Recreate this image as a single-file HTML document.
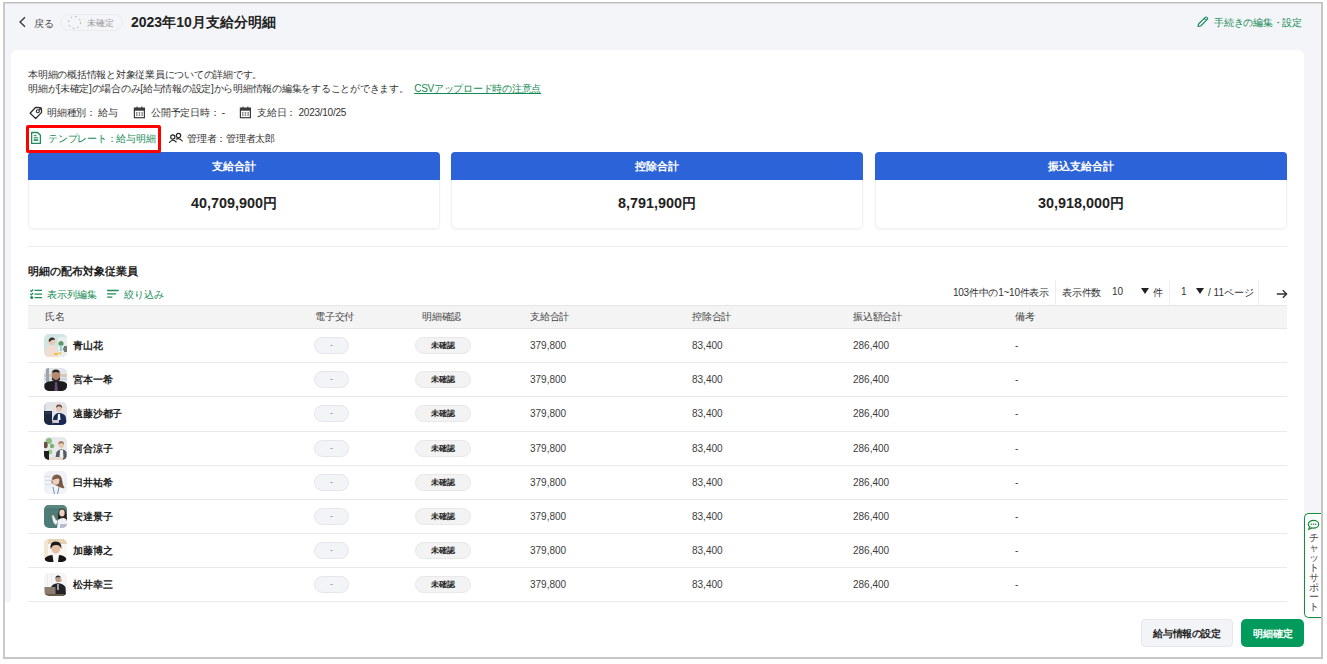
<!DOCTYPE html>
<html lang="ja">
<head>
<meta charset="utf-8">
<style>
*{box-sizing:border-box;margin:0;padding:0}
html,body{width:1327px;height:664px;overflow:hidden;background:#fff;font-family:"Liberation Sans",sans-serif;color:#333}
.a{position:absolute;white-space:nowrap}
.frame{position:absolute;left:3px;top:2px;width:1320px;height:657px;border:2px solid #c6c6c6;border-top:1px solid #bdbdbd;border-left-color:#cacaca;background:#f4f5f9;box-shadow:inset 0 1px 0 #dddddf}
.card{position:absolute;left:11px;top:50px;width:1293px;height:600px;background:#fff;border-radius:6px}
.t93{font-size:10px;letter-spacing:-0.25px}
.green{color:#138a52}
.link{color:#138a52;text-decoration:underline}
.redbox{left:26px;top:125px;width:135px;height:28px;border:3px solid #ff0000;border-radius:2px;z-index:2}
.sum{position:absolute;top:152px;width:412px;height:77px;border-radius:5px;background:#fff;box-shadow:0 1px 2px rgba(0,0,0,0.05)}
.sum .h{border-radius:4px 4px 0 0;height:27.5px;background:#2c63d8;color:#fff;font-weight:bold;font-size:11px;text-align:center;line-height:29px}
.sum .v{height:49px;text-align:center;font-weight:bold;font-size:14.4px;line-height:47px;color:#222;border:1px solid #f0f0f2;border-top:none;border-radius:0 0 5px 5px}
.divider{position:absolute;left:28px;top:246px;width:1259px;height:1px;background:#ededf0}
.vline{position:absolute;top:280px;width:1px;height:25px;background:#eee}
.thbar{position:absolute;left:28px;top:305px;width:1259px;height:24px;background:#f4f4f4;border-top:1px solid #e6e6e6;border-bottom:1px solid #e6e6e6}
.row{position:absolute;left:28px;width:1259px;height:34px;border-bottom:1px solid #e9e9e9}
.th{top:310px;font-size:10px;letter-spacing:-0.25px;color:#444}
.av{position:absolute;left:16px;top:5px;width:23px;height:23px}
.nm{position:absolute;left:45px;top:10px;font-weight:bold;color:#222;font-size:10px;letter-spacing:-0.15px}
.p1{position:absolute;left:286px;top:8px;width:35px;height:17px;border:1px solid #e4e6ec;border-radius:9px;background:#f3f4f8;text-align:center;line-height:15px;font-size:9px;color:#888}
.p2{position:absolute;left:387px;top:8px;width:56px;height:17px;border:1px solid #e8e8e8;border-radius:9px;background:#f3f3f3;text-align:center;line-height:16px;font-size:8px;letter-spacing:0.3px;font-weight:bold;color:#222}
.c{position:absolute;top:10.5px;font-size:10px;color:#3c3c3c}
.footer{position:absolute;left:5px;top:602px;width:1316px;height:55px;background:#fff}
.btn1{position:absolute;left:1141px;top:619px;width:92px;height:28px;border:1px solid #e6e7ee;border-radius:4px;background:#f3f4f8;font-size:10px;letter-spacing:-0.35px;font-weight:bold;text-align:center;line-height:28px;color:#222}
.btn2{position:absolute;left:1241px;top:619px;width:63px;height:28px;border-radius:5px;background:#039b5b;font-size:10px;font-weight:bold;text-align:center;line-height:30px;color:#fff}
.chat{position:absolute;left:1304px;top:513px;width:17px;height:105px;border:1.5px solid #178c3e;border-right:none;border-radius:5px 0 0 5px;background:#fff;box-shadow:0 1px 3px rgba(0,0,0,0.08)}
</style>
</head>
<body>
<div class="frame"></div>
<!-- header -->
<svg class="a" style="left:18px;top:16px" width="9" height="12" viewBox="0 0 9 12"><polyline points="7,1.2 2,6 7,10.8" fill="none" stroke="#333" stroke-width="1.3"/></svg>
<div class="a t93" style="left:34px;top:17px;color:#444">戻る</div>
<div class="a" style="left:60px;top:14px;width:63px;height:17px;border:1px solid #ebebee;border-radius:9px;background:#f4f5f8"></div>
<svg class="a" style="left:67px;top:15px" width="15" height="15" viewBox="0 0 15 15"><circle cx="7.5" cy="7.5" r="6" fill="none" stroke="#aaa" stroke-width="1" stroke-dasharray="1.6 3.1"/></svg>
<div class="a" style="left:87px;top:16.5px;font-size:9px;color:#999">未確定</div>
<div class="a" style="left:131px;top:14px;font-size:14px;font-weight:bold;color:#222">2023年10月支給分明細</div>
<svg class="a" style="left:1196px;top:16px" width="13" height="12" viewBox="0 0 13 12"><path d="M2,10.5 L2.6,8 L9.2,1.4 Q10,0.7 10.8,1.4 L11.3,1.9 Q12,2.7 11.3,3.4 L4.7,10 Z M8.3,2.4 L10.3,4.4" fill="none" stroke="#17885a" stroke-width="1.1" stroke-linejoin="round"/></svg>
<div class="a green t93" style="left:1214px;top:16px">手続きの編集・設定</div>

<div class="card"></div>
<div class="a t93" style="left:28px;top:68px;line-height:14px;color:#333">本明細の概括情報と対象従業員についての詳細です。<br>明細が[未確定]の場合のみ[給与情報の設定]から明細情報の編集をすることができます。 <span class="link" style="margin-left:3px">CSVアップロード時の注意点</span></div>

<div class="a t93" style="left:47px;top:106px">明細種別： 給与</div>
<div class="a t93" style="left:151px;top:106px">公開予定日時： -</div>
<div class="a t93" style="left:257px;top:106px">支給日： 2023/10/25</div>

<svg class="a" style="left:29px;top:106px" width="14" height="14" viewBox="0 0 14 14"><path d="M1.1,7.3 L6.7,1.3 L11.3,1.6 Q12.3,1.7 12.4,2.7 L12.6,6.4 L6.7,12.5 Z" fill="none" stroke="#2a2a2a" stroke-width="1.25" stroke-linejoin="round"/><circle cx="8.8" cy="5.2" r="1.5" fill="none" stroke="#2a2a2a" stroke-width="1.15"/><path d="M9.6,3.2 L11.2,1.7 L12.3,2.8 L10.8,4.4 Z" fill="#2a2a2a"/></svg>
<svg class="a" style="left:133px;top:106px" width="13" height="13" viewBox="0 0 13 13"><rect x="1.4" y="2.1" width="10" height="9.6" fill="none" stroke="#3a3a3a" stroke-width="1.2"/><rect x="1.4" y="2.1" width="10" height="2.6" fill="#3a3a3a"/><rect x="3.4" y="0.6" width="1.2" height="2.4" fill="#3a3a3a"/><rect x="8.2" y="0.6" width="1.2" height="2.4" fill="#3a3a3a"/><g fill="#3a3a3a"><rect x="3" y="6.4" width="1.5" height="1.1"/><rect x="5.7" y="6.4" width="1.5" height="1.1"/><rect x="8.4" y="6.4" width="1.5" height="1.1"/><rect x="3" y="8.5" width="1.5" height="1.1"/><rect x="5.7" y="8.5" width="1.5" height="1.1"/><rect x="8.4" y="8.5" width="1.5" height="1.1"/></g></svg>
<svg class="a" style="left:239px;top:106px" width="13" height="13" viewBox="0 0 13 13"><rect x="1.4" y="2.1" width="10" height="9.6" fill="none" stroke="#3a3a3a" stroke-width="1.2"/><rect x="1.4" y="2.1" width="10" height="2.6" fill="#3a3a3a"/><rect x="3.4" y="0.6" width="1.2" height="2.4" fill="#3a3a3a"/><rect x="8.2" y="0.6" width="1.2" height="2.4" fill="#3a3a3a"/><g fill="#3a3a3a"><rect x="3" y="6.4" width="1.5" height="1.1"/><rect x="5.7" y="6.4" width="1.5" height="1.1"/><rect x="8.4" y="6.4" width="1.5" height="1.1"/><rect x="3" y="8.5" width="1.5" height="1.1"/><rect x="5.7" y="8.5" width="1.5" height="1.1"/><rect x="8.4" y="8.5" width="1.5" height="1.1"/></g></svg>
<svg class="a" style="left:30px;top:131px" width="12" height="14" viewBox="0 0 12 14"><path d="M1.6,1.5 L7.6,1.5 L10.4,4.3 L10.4,12.4 L1.6,12.4 Z" fill="none" stroke="#1f8a5a" stroke-width="1.3" stroke-linejoin="round"/><rect x="3.6" y="4.2" width="3" height="1" fill="#1f8a5a"/><rect x="3.6" y="6.3" width="4.6" height="1.1" fill="#1f8a5a"/><rect x="3.6" y="8.3" width="4.6" height="1.6" fill="#1f8a5a"/></svg>
<svg class="a" style="left:168px;top:132px" width="16" height="12" viewBox="0 0 16 12"><circle cx="4.8" cy="5" r="2.1" fill="none" stroke="#222" stroke-width="1.15"/><circle cx="10.5" cy="3.5" r="2.2" fill="none" stroke="#222" stroke-width="1.15"/><path d="M1.4,10.4 Q4.8,6.4 8.2,10" fill="none" stroke="#222" stroke-width="1.15" stroke-linecap="round"/><path d="M8.4,7.1 Q11.4,5.6 14.3,9" fill="none" stroke="#222" stroke-width="1.15" stroke-linecap="round"/></svg>
<div class="a redbox"></div>
<div class="a t93 green" style="left:48px;top:132px">テンプレート：給与明細</div>
<div class="a t93" style="left:187px;top:132px">管理者：管理者太郎</div>

<div class="sum" style="left:28px"><div class="h">支給合計</div><div class="v">40,709,900円</div></div>
<div class="sum" style="left:451px"><div class="h">控除合計</div><div class="v">8,791,900円</div></div>
<div class="sum" style="left:875px"><div class="h">振込支給合計</div><div class="v">30,918,000円</div></div>

<div class="divider"></div>
<div class="a" style="left:28px;top:264px;font-size:11px;font-weight:bold;color:#222">明細の配布対象従業員</div>

<svg class="a" style="left:29px;top:288px" width="14" height="12" viewBox="0 0 14 12"><path d="M1.2,2.4 L2.4,3.4 L4.2,1.3 M1.2,5.8 L2.4,6.9 L4.2,4.8" fill="none" stroke="#1f8a5a" stroke-width="1.2"/><circle cx="2.7" cy="9.6" r="1.5" fill="#1f8a5a"/><path d="M5.5,2.3 L13,2.3 M5.5,6.2 L13,6.2 M5.5,9.6 L13,9.6" stroke="#1f8a5a" stroke-width="1.3"/></svg>
<svg class="a" style="left:106px;top:288px" width="14" height="12" viewBox="0 0 14 12"><path d="M1.6,2.5 L12.2,2.5 M1.6,5.9 L9.5,5.9 M1.6,9.1 L5.9,9.1" stroke="#1f8a5a" stroke-width="1.3" stroke-linecap="round"/></svg>
<div class="a green" style="left:47px;top:288px;font-size:10px">表示列編集</div>
<div class="a green" style="left:124px;top:288px;font-size:10px">絞り込み</div>

<div class="a t93" style="left:953px;top:285.5px">103件中の1~10件表示</div>
<div class="vline" style="left:1055px"></div>
<div class="a t93" style="left:1062px;top:285.5px">表示件数</div>
<div class="a" style="left:1112px;top:286px;font-size:10px;color:#333">10</div>
<svg class="a" style="left:1141px;top:288px" width="8" height="6" viewBox="0 0 8 6"><path d="M0,0 L8,0 L4,6 Z" fill="#222"/></svg><div class="a t93" style="left:1153px;top:285.5px">件</div>
<div class="vline" style="left:1169px"></div>
<div class="a" style="left:1181px;top:286px;font-size:10px;color:#333">1</div>
<svg class="a" style="left:1196px;top:288px" width="8" height="6" viewBox="0 0 8 6"><path d="M0,0 L8,0 L4,6 Z" fill="#222"/></svg><div class="a" style="left:1208px;top:285.5px;font-size:10px;color:#333">/ 11ページ</div>
<div class="vline" style="left:1258px"></div>
<svg class="a" style="left:1276px;top:289px" width="12" height="10" viewBox="0 0 12 10"><path d="M0.8,5 L10.6,5 M6.8,1.2 L10.6,5 L6.8,8.8" fill="none" stroke="#333" stroke-width="1.4"/></svg>

<div class="thbar"></div>
<div class="a th" style="left:45px">氏名</div>
<div class="a th" style="left:315px">電子交付</div>
<div class="a th" style="left:422px">明細確認</div>
<div class="a th" style="left:530px">支給合計</div>
<div class="a th" style="left:692px">控除合計</div>
<div class="a th" style="left:853px">振込額合計</div>
<div class="a th" style="left:1015px">備考</div>

<div class="row" style="top:329px;height:34px"><svg class="av" width="23" height="23" viewBox="0 0 23 23"><defs><clipPath id="c0"><rect width="23" height="23" rx="5"/></clipPath></defs><g clip-path="url(#c0)"><rect width="23" height="23" fill="#cfe6e3"/><rect x="14" y="3" width="9" height="20" fill="#e9efee"/><circle cx="17" cy="9.5" r="2.6" fill="#5f9a6a"/><rect x="16" y="11" width="2" height="6" fill="#9fd0cc"/><circle cx="21" cy="15" r="2" fill="#4f8a5a"/><rect x="20" y="12" width="3" height="6" fill="#777"/><ellipse cx="8" cy="7.5" rx="3.3" ry="3.6" fill="#e7c7b4"/><path d="M4.6,7 Q5,3.2 8.4,3.5 Q11,3.8 10.8,6 Q8,5 5.5,8 Z" fill="#3a302c"/><path d="M1,23 L1.5,14 Q4,11 8,11.5 Q12,12 13.5,15 L14,23 Z" fill="#f2ddd2"/><rect x="10" y="19" width="4" height="2" fill="#f2c040"/><rect x="14.5" y="18" width="3" height="2.5" fill="#f0d070"/></g></svg><span class="nm">青山花</span><span class="p1">-</span><span class="p2">未確認</span><span class="c" style="left:502px">379,800</span><span class="c" style="left:664px">83,400</span><span class="c" style="left:825px">286,400</span><span class="c" style="left:987px">-</span></div>
<div class="row" style="top:363px;height:34px"><svg class="av" width="23" height="23" viewBox="0 0 23 23"><defs><clipPath id="c1"><rect width="23" height="23" rx="5"/></clipPath></defs><g clip-path="url(#c1)"><rect width="23" height="23" fill="#e2e6ea"/><rect y="6" width="23" height="3" fill="#d9c8b8"/><rect y="10" width="23" height="2" fill="#c8d4e0"/><rect x="2" y="0" width="3" height="23" fill="#9aa4ae"/><ellipse cx="12" cy="7.5" rx="4.2" ry="5" fill="#b48a72"/><path d="M7.6,6 Q8,1.5 12,1.6 Q16,1.7 16.3,6 L15.5,4.5 Q12,3.5 8.5,4.5 Z" fill="#2a2220"/><path d="M8,9 Q12,15 16,9 L16,12 Q12,15.5 8,12 Z" fill="#3a2a24"/><path d="M0,23 L0.5,16 Q3,13 9,13 L15,13 Q21,13 23,16 L23,23 Z" fill="#1c1c1e"/><path d="M11,14 L13,14 L14,23 L10.5,23 Z" fill="#6a4a7a"/></g></svg><span class="nm">宮本一希</span><span class="p1">-</span><span class="p2">未確認</span><span class="c" style="left:502px">379,800</span><span class="c" style="left:664px">83,400</span><span class="c" style="left:825px">286,400</span><span class="c" style="left:987px">-</span></div>
<div class="row" style="top:397px;height:35px"><svg class="av" width="23" height="23" viewBox="0 0 23 23"><defs><clipPath id="c2"><rect width="23" height="23" rx="5"/></clipPath></defs><g clip-path="url(#c2)"><rect width="23" height="23" fill="#e4e4e6"/><rect x="0" y="1" width="1.5" height="14" fill="#bcd0e6"/><rect x="0" y="9" width="8" height="14" fill="#1e2840"/><rect x="1" y="10.5" width="6" height="1" fill="#3a4a66"/><ellipse cx="15" cy="6.5" rx="2.8" ry="3.3" fill="#e4c4b0"/><path d="M12,6 Q12,2.5 15,2.6 Q18.4,2.7 18.2,6.5 L17,5 Q15,3.6 13,5 Z" fill="#6a4a36"/><path d="M8,23 L9.5,15 Q12,10.5 15,11 Q19,11 21.5,14 L23,23 Z" fill="#1a2a56"/><path d="M14,12 L16,12 L16.5,18 L13.5,18 Z" fill="#f4f4f4"/><rect x="9" y="18" width="6" height="3" fill="#d8ccc4"/></g></svg><span class="nm">遠藤沙都子</span><span class="p1">-</span><span class="p2">未確認</span><span class="c" style="left:502px">379,800</span><span class="c" style="left:664px">83,400</span><span class="c" style="left:825px">286,400</span><span class="c" style="left:987px">-</span></div>
<div class="row" style="top:432px;height:34px"><svg class="av" width="23" height="23" viewBox="0 0 23 23"><defs><clipPath id="c3"><rect width="23" height="23" rx="5"/></clipPath></defs><g clip-path="url(#c3)"><rect width="23" height="23" fill="#e6eaec"/><circle cx="5" cy="4" r="3" fill="#8cbe80"/><circle cx="8" cy="9" r="2.2" fill="#7ab070"/><circle cx="6" cy="15" r="2.4" fill="#9acb8c"/><ellipse cx="1.5" cy="8" rx="2.2" ry="3.2" fill="#6a5040"/><rect x="0" y="14" width="5" height="9" fill="#1e1e22"/><ellipse cx="17.2" cy="8" rx="2.6" ry="3" fill="#e8c8b0"/><path d="M14.4,8 Q14,4 17.2,4.2 Q20.4,4.3 20,8 L19,6.5 Q17,5.2 15.2,6.8 Z" fill="#9a6a48"/><path d="M11,23 L12.5,15 Q15,12 17.5,12.2 Q21,12.5 22.5,15 L23,23 Z" fill="#585c62"/><path d="M16,13 L19,13 L19.5,21 L15.5,21 Z" fill="#f2f2f2"/><rect x="5" y="20" width="14" height="3" fill="#e8dcd0"/></g></svg><span class="nm">河合涼子</span><span class="p1">-</span><span class="p2">未確認</span><span class="c" style="left:502px">379,800</span><span class="c" style="left:664px">83,400</span><span class="c" style="left:825px">286,400</span><span class="c" style="left:987px">-</span></div>
<div class="row" style="top:466px;height:34px"><svg class="av" width="23" height="23" viewBox="0 0 23 23"><defs><clipPath id="c4"><rect width="23" height="23" rx="5"/></clipPath></defs><g clip-path="url(#c4)"><rect width="23" height="23" fill="#eef1f5"/><rect x="1" y="5" width="6" height="1" fill="#d4dde8"/><rect x="1" y="9" width="6" height="1" fill="#d4dde8"/><rect x="1" y="13" width="6" height="1" fill="#d4dde8"/><path d="M7.5,12 Q6.8,4 12.5,3.5 Q18,3.5 18.2,10 Q19,15 20.5,17 Q17,18 15,16 Z" fill="#7a5844"/><ellipse cx="11.8" cy="9.5" rx="3.6" ry="4.2" fill="#ecd0bc"/><path d="M8.5,8 Q9,5 12.5,5 Q15.5,5.2 15.8,8 Q13,6.5 9,9 Z" fill="#7a5844"/><path d="M4,23 L5,18 Q8,15 12,15.5 Q17,15.5 19,18 L20,23 Z" fill="#f4f4f6"/><path d="M9,16 L10.5,23 M15,16 L13.5,23" stroke="#6a90c8" stroke-width="1"/><rect x="16" y="9" width="1.5" height="3" fill="#555"/></g></svg><span class="nm">臼井祐希</span><span class="p1">-</span><span class="p2">未確認</span><span class="c" style="left:502px">379,800</span><span class="c" style="left:664px">83,400</span><span class="c" style="left:825px">286,400</span><span class="c" style="left:987px">-</span></div>
<div class="row" style="top:500px;height:34px"><svg class="av" width="23" height="23" viewBox="0 0 23 23"><defs><clipPath id="c5"><rect width="23" height="23" rx="5"/></clipPath></defs><g clip-path="url(#c5)"><rect width="23" height="23" fill="#4d7b75"/><rect x="0" y="0" width="23" height="3" fill="#5a8680"/><path d="M14,14 Q13.5,4 17.5,3.5 Q22,3.5 22.5,10 L23,16 Z" fill="#2a2220"/><ellipse cx="18" cy="8" rx="2.7" ry="3.4" fill="#ecd4c4"/><path d="M13,23 L14,15 Q17,12.5 20,13 Q23,14 23,16 L23,23 Z" fill="#f2f2f4"/><path d="M8.5,12 Q8,17 12,20 L14,16 Q11,15 10.5,12 Z" fill="#f2f2f4"/><ellipse cx="9" cy="11.5" rx="1.2" ry="1.5" fill="#ecd4c4"/><rect x="16" y="19" width="7" height="4" fill="#b8bcd0"/></g></svg><span class="nm">安達景子</span><span class="p1">-</span><span class="p2">未確認</span><span class="c" style="left:502px">379,800</span><span class="c" style="left:664px">83,400</span><span class="c" style="left:825px">286,400</span><span class="c" style="left:987px">-</span></div>
<div class="row" style="top:534px;height:34px"><svg class="av" width="23" height="23" viewBox="0 0 23 23"><defs><clipPath id="c6"><rect width="23" height="23" rx="5"/></clipPath></defs><g clip-path="url(#c6)"><rect width="23" height="23" fill="#faf6f0"/><rect width="23" height="5" fill="#e4d2b4"/><rect x="0" y="0" width="4" height="23" fill="#f2e6d4"/><ellipse cx="11.8" cy="9.3" rx="4.6" ry="5.2" fill="#e4c0a4"/><path d="M6.6,10 Q5.5,3 11.5,2.6 Q18,2.5 17.3,10 L16.5,8 Q15,5.5 12,6 Q8.5,5.5 7.5,8.5 Z" fill="#1c1a1a"/><path d="M0,23 L1,19 Q4,16 9,16 L14.5,16 Q19.5,16 22,19 L23,23 Z" fill="#161616"/><path d="M8.5,16 L15,16 L14,23 L9.5,23 Z" fill="#f6f6f4"/></g></svg><span class="nm">加藤博之</span><span class="p1">-</span><span class="p2">未確認</span><span class="c" style="left:502px">379,800</span><span class="c" style="left:664px">83,400</span><span class="c" style="left:825px">286,400</span><span class="c" style="left:987px">-</span></div>
<div class="row" style="top:568px;height:34px"><svg class="av" width="23" height="23" viewBox="0 0 23 23"><defs><clipPath id="c7"><rect width="23" height="23" rx="5"/></clipPath></defs><g clip-path="url(#c7)"><rect width="23" height="23" fill="#f6f6f6"/><rect x="3" y="0" width="1" height="23" fill="#ececec"/><rect x="7" y="0" width="1" height="23" fill="#ececec"/><ellipse cx="14" cy="6.2" rx="2.6" ry="3" fill="#b89a86"/><path d="M11.3,5.5 Q11.5,2.5 14,2.5 Q16.8,2.5 16.7,5.5 L16,4.3 Q14,3.6 12,4.5 Z" fill="#2e2e30"/><path d="M7,23 L7.5,13 Q10,10 14,10.3 Q19,10.5 21.5,14 L22,23 Z" fill="#242428"/><path d="M13,11 L15,11 L15,17 L13,17 Z" fill="#9aa0a8"/><circle cx="16.5" cy="7.5" r="1.2" fill="#c8a888"/><rect x="0.5" y="14" width="11" height="7.5" fill="#8c7c70"/><rect x="0" y="21" width="20" height="2" fill="#6a5a4c"/></g></svg><span class="nm">松井幸三</span><span class="p1">-</span><span class="p2">未確認</span><span class="c" style="left:502px">379,800</span><span class="c" style="left:664px">83,400</span><span class="c" style="left:825px">286,400</span><span class="c" style="left:987px">-</span></div>

<div class="footer"></div>
<div class="btn1">給与情報の設定</div>
<div class="btn2">明細確定</div>
<div class="chat"></div>
<svg class="a" style="left:1307px;top:519px" width="13" height="12" viewBox="0 0 13 12"><ellipse cx="6.5" cy="5.3" rx="5.2" ry="3.9" fill="none" stroke="#1a8a3a" stroke-width="1.2"/><path d="M2.6,8 L1.6,10.6 L4.8,9" fill="#fff" stroke="#1a8a3a" stroke-width="1.1" stroke-linejoin="round"/><circle cx="4.3" cy="5.3" r="0.8" fill="#1a8a3a"/><circle cx="6.5" cy="5.3" r="0.8" fill="#1a8a3a"/><circle cx="8.7" cy="5.3" r="0.8" fill="#1a8a3a"/></svg>
<div class="a" style="left:1308.5px;top:533px;font-size:9.5px;line-height:9.9px;width:10px;white-space:normal;color:#4a4a4a;text-align:center">チ<br>ャ<br>ッ<br>ト<br>サ<br>ポ<br>ー<br>ト</div>
</body>
</html>
